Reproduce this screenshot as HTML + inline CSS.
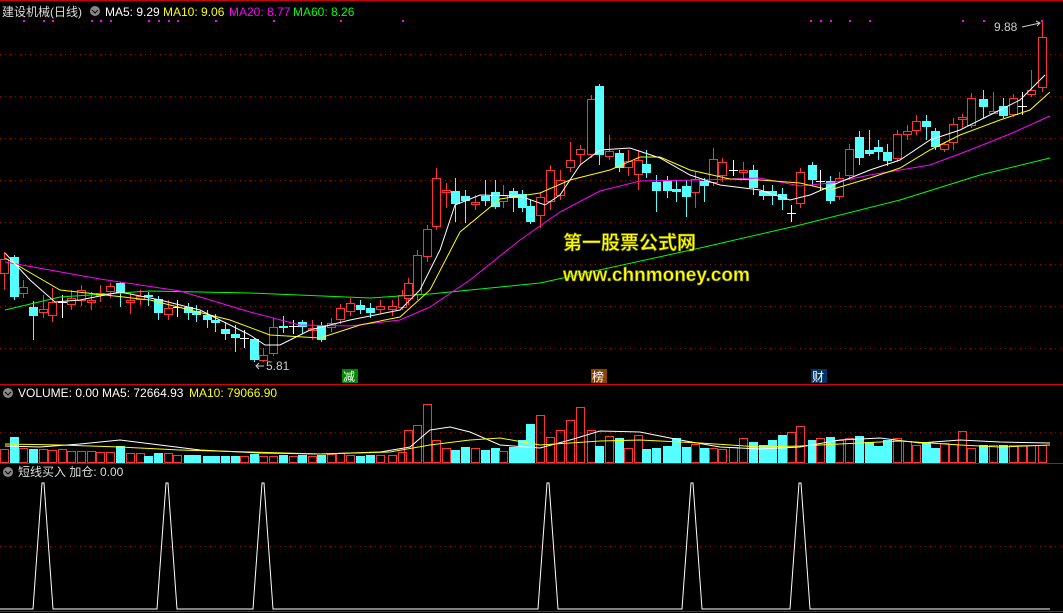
<!DOCTYPE html>
<html><head><meta charset="utf-8"><style>
html,body{margin:0;padding:0;background:#000;width:1063px;height:613px;overflow:hidden}
svg{display:block}
text{font-family:"Liberation Sans","Noto Sans CJK SC",sans-serif;font-size:12px}
</style></head><body>
<svg id="s" width="1063" height="613" xmlns="http://www.w3.org/2000/svg">
<rect width="1063" height="613" fill="#000"/>
<line x1="0" y1="0.5" x2="1063" y2="0.5" stroke="#c00"/>
<g stroke="#a00" stroke-dasharray="1,4" stroke-width="1">
<line x1="0" y1="54.5" x2="1063" y2="54.5"/><line x1="0" y1="96.5" x2="1063" y2="96.5"/>
<line x1="0" y1="138.5" x2="1063" y2="138.5"/><line x1="0" y1="180.5" x2="1063" y2="180.5"/>
<line x1="0" y1="222.5" x2="1063" y2="222.5"/><line x1="0" y1="264.5" x2="1063" y2="264.5"/>
<line x1="0" y1="306.5" x2="1063" y2="306.5"/><line x1="0" y1="348.5" x2="1063" y2="348.5"/>
<line x1="0" y1="432.5" x2="1063" y2="432.5"/><line x1="0" y1="546.5" x2="1063" y2="546.5"/>
</g>
<line x1="0" y1="384.5" x2="1063" y2="384.5" stroke="#d00"/>
<line x1="0" y1="463.5" x2="1063" y2="463.5" stroke="#d00"/>
<line x1="0" y1="611.5" x2="1063" y2="611.5" stroke="#d00"/>
<g id="c"></g>
<!-- headers -->
<text x="2" y="16" fill="#ddd">建设机械(日线)</text>
<circle cx="95" cy="11" r="5" fill="#888"/><path d="M92 10l3 3 3-3" stroke="#000" fill="none"/>
<text x="105" y="16" fill="#fff">MA5: 9.29</text>
<text x="163" y="16" fill="#ff0">MA10: 9.06</text>
<text x="229" y="16" fill="#f0f">MA20: 8.77</text>
<text x="293" y="16" fill="#0f0">MA60: 8.26</text>
<circle cx="8" cy="393" r="5" fill="#888"/><path d="M5 392l3 3 3-3" stroke="#000" fill="none"/>
<text x="18" y="397" fill="#fff">VOLUME: 0.00  MA5: 72664.93</text>
<text x="189" y="397" fill="#ff0">MA10: 79066.90</text>
<circle cx="8" cy="472" r="5" fill="#888"/><path d="M5 471l3 3 3-3" stroke="#000" fill="none"/>
<text x="18" y="476" fill="#ddd">短线买入  加仓: 0.00</text>
<text x="266" y="370" fill="#ccc">5.81</text>
<path d="M264 366h-8m3-3l-3 3 3 3" stroke="#ccc" fill="none"/>
<text x="994" y="31" fill="#ccc">9.88</text>
<path d="M1022 27l18-4m-4-2l4 2-3 3" stroke="#ccc" fill="none"/>
<rect x="342" y="369" width="16" height="14" fill="#080"/><text x="343" y="381" fill="#fff">减</text>
<rect x="591" y="369" width="16" height="14" fill="#840"/><text x="592" y="381" fill="#fff">榜</text>
<rect x="811" y="369" width="16" height="14" fill="#036"/><text x="812" y="381" fill="#fff">财</text>
<text x="563" y="249" fill="#ff0" stroke="#660" stroke-width="0.6" style="font-size:19px;font-weight:bold">第一股票公式网</text>
<text x="563" y="281" fill="#ff0" stroke="#660" stroke-width="0.6" style="font-size:19px;font-weight:bold">www.chnmoney.com</text>
</svg>
<script>
var C=[[4,'r',274,259,252,290],[14,'c',257,297,255,300],[23,'r',294,287,280,298],[33,'c',307,316,301,340],[43,'r',313,309,295,318],
[52,'r',316,302,288,322],[62,'x',302,302,295,318],[71,'r',305,298,290,310],[81,'r',301,290,285,306],[91,'r',303,300,292,310],
[100,'r',296,293,285,302],[110,'r',292,286,283,298],[120,'c',283,293,282,307],[130,'r',302,300,292,314],[140,'r',300,296,290,305],
[148,'c',295,297,292,306],[158,'c',299,313,296,320],[168,'r',315,308,300,320],[177,'x',307,307,300,317],[188,'c',307,313,303,320],
[196,'c',311,315,305,322],[207,'c',315,320,310,328],[215,'c',320,323,314,332],[225,'c',329,334,322,340],[235,'c',334,338,325,352],
[244,'x',338,338,330,348],[254,'c',339,360,338,362],[263,'r',361,355,348,362],[273,'r',354,327,318,356],[283,'c',326,328,316,333],
[293,'x',326,326,320,334],[302,'c',322,327,320,334],[312,'r',330,328,320,340],[321,'c',325,340,322,342],[331,'r',328,323,318,332],
[340,'r',320,308,304,324],[350,'r',312,303,298,316],[360,'c',305,310,300,314],[370,'c',308,313,303,318],[380,'r',310,306,300,314],
[392,'r',310,306,300,316],[402,'r',308,295,290,310],[408,'r',299,283,278,305],[417,'r',295,255,250,300],[427,'r',257,229,225,262],
[436,'r',227,178,168,230],[446,'r',191,190,183,208],[455,'c',191,204,178,222],[465,'c',196,201,190,223],[475,'r',203,202,195,210],
[485,'c',196,201,180,206],[495,'c',192,207,180,209],[503,'r',202,195,185,208],[513,'c',191,198,188,212],[522,'c',194,208,190,212],
[530,'c',206,222,200,224],[540,'r',216,197,192,228],[550,'r',202,170,165,210],[560,'r',196,180,170,200],[570,'r',168,160,142,172],
[580,'r',155,149,145,166],[591,'r',155,99,95,158],[599,'c',86,155,84,165],[609,'r',157,151,135,160],[619,'c',153,168,150,172],
[628,'r',168,161,150,176],[638,'r',175,160,150,190],[646,'c',164,173,150,178],[656,'c',182,191,175,212],[667,'c',181,191,176,198],
[676,'c',189,192,180,202],[686,'c',186,197,180,217],[695,'r',193,179,172,208],[704,'c',181,186,178,202],[713,'r',183,159,148,186],
[722,'r',176,162,158,182],[733,'x',170,170,160,176],[743,'r',173,170,162,180],[753,'c',170,188,165,195],[763,'c',191,196,185,200],
[772,'c',191,196,185,205],[782,'c',194,200,188,210],[791,'x',213,213,205,222],[800,'r',204,172,168,208],[812,'c',165,180,162,186],
[820,'x',181,181,170,190],[830,'c',181,201,176,204],[839,'r',197,178,172,200],[849,'r',176,149,144,180],[859,'c',137,158,131,165],
[869,'c',150,154,130,156],[878,'c',147,152,140,160],[887,'c',152,161,144,166],[897,'r',159,134,130,162],[907,'r',135,131,125,140],
[916,'r',131,121,115,135],[926,'c',121,127,115,140],[935,'c',131,147,128,150],[944,'r',150,144,142,152],[953,'r',143,124,118,150],
[962,'r',120,117,114,128],[971,'r',126,98,93,128],[983,'c',99,107,90,118],[993,'r',112,111,92,114],[1003,'c',106,116,98,118],
[1013,'r',115,98,94,117],[1022,'x',106,106,92,115],[1031,'r',95,90,70,97],[1042,'r',88,37,22,92]];
var V=[449,437,448,449,449,450,449,451,451,451,452,452,446,453,453,456,453,453,455,455,455,456,456,456,456,456,454,456,456,455,456,455,456,455,454,453,455,456,455,455,455,452,430,425,404,440,448,450,447,448,450,448,451,447,440,424,415,437,430,420,407,430,446,436,438,448,435,449,448,446,438,447,444,448,448,449,447,438,442,445,440,435,432,426,440,438,437,440,438,436,442,446,440,438,441,445,442,448,443,444,431,448];
var h='';
C.forEach(function(d,i){var x=d[0],t=d[1],o=d[2],c=d[3],hi=d[4],lo=d[5];
var col=t=='c'?'#5ff':(t=='x'?'#fff':'#f33');
var top=Math.min(o,c),bot=Math.max(o,c);
h+='<line x1="'+(x+0.5)+'" y1="'+hi+'" x2="'+(x+0.5)+'" y2="'+lo+'" stroke="'+col+'"/>';
if(t=='c')h+='<rect x="'+(x-4)+'" y="'+top+'" width="9" height="'+Math.max(bot-top,2)+'" fill="#5ff"/>';
else if(t=='x')h+='<line x1="'+(x-4)+'" y1="'+(o+0.5)+'" x2="'+(x+5)+'" y2="'+(o+0.5)+'" stroke="#fff"/>';
else h+='<rect x="'+(x-3.5)+'" y="'+(top+0.5)+'" width="8" height="'+Math.max(bot-top-1,2)+'" fill="#000" stroke="#f33"/>';
var vt=V[i]||445; if(t=='c')h+='<rect x="'+(x-4)+'" y="'+vt+'" width="9" height="'+(463-vt)+'" fill="#5ff"/>';
else h+='<rect x="'+(x-3.5)+'" y="'+(vt+0.5)+'" width="8" height="'+(462-vt)+'" fill="none" stroke="#f33"/>';
});
function pl(p,c){h+='<polyline points="'+p+'" fill="none" stroke="'+c+'" stroke-width="1"/>';}
pl('5,310 60,297 150,291 250,293 370,298 430,294 540,283 700,248 800,225 900,200 980,175 1050,158','#0f0');
pl('5,262 100,279 180,291 250,312 300,325 350,326 400,320 430,307 470,280 520,240 560,212 600,191 640,181 700,180 760,178 800,186 830,183 870,175 930,165 970,150 1010,134 1050,116','#f0f');
pl('5,258 60,290 150,300 230,320 270,335 320,338 360,325 400,317 430,290 460,232 500,199 540,193 570,180 610,170 640,157 660,157 690,170 730,179 760,180 800,183 830,190 870,178 900,168 930,150 960,135 1000,120 1030,110 1050,92','#ff0');
pl('5,253 30,280 55,302 80,300 120,292 160,300 200,310 250,335 265,345 280,345 310,330 350,320 400,310 420,290 440,250 455,205 480,195 520,196 545,205 560,195 580,165 600,150 630,148 660,158 690,175 720,185 760,190 790,200 810,195 840,182 870,170 900,160 930,140 960,130 990,115 1020,100 1045,75','#fff');
pl('5,446 40,447 80,444 120,440 160,445 200,450 260,453 320,454 380,452 410,447 430,430 450,427 470,432 500,445 540,448 570,440 600,431 640,432 680,440 720,447 760,449 800,447 840,440 880,438 920,443 960,440 1000,442 1050,443','#fff');
pl('5,444 60,445 120,447 180,450 250,452 320,454 390,452 430,445 470,440 500,438 540,445 600,441 640,440 700,443 760,447 800,446 840,444 900,441 960,445 1000,447 1050,445','#ff0');
var pk=[43,167,263,548,692,800],p='0,609 ';
pk.forEach(function(x){p+=(x-10)+',609 '+(x-1)+',483 '+(x+1)+',483 '+(x+10)+',609 ';});p+='1050,609';
pl(p,'#fff');
[23,43,52,91,100,110,148,158,168,177,215,273,340,402,810,820,830,849,869,962,983,1041].forEach(function(x){h+='<rect x="'+x+'" y="20" width="2" height="2" fill="#f0f"/>';});
document.getElementById('c').innerHTML=h;
</script>
</body></html>
